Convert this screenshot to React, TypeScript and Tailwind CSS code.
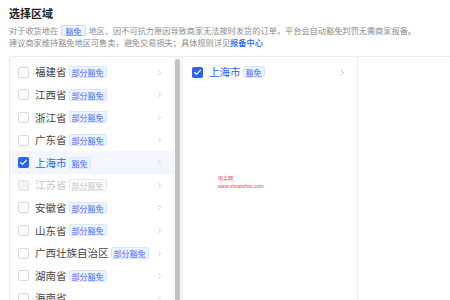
import { Check, ChevronRight } from "lucide-react";

type Region = { name: string; tag?: string; checked?: boolean; disabled?: boolean };

const regions: Region[] = [
  { name: "福建省", tag: "部分豁免" },
  { name: "江西省", tag: "部分豁免" },
  { name: "浙江省", tag: "部分豁免" },
  { name: "广东省", tag: "部分豁免" },
  { name: "上海市", tag: "豁免", checked: true },
  { name: "江苏省", tag: "部分豁免", disabled: true },
  { name: "安徽省", tag: "部分豁免" },
  { name: "山东省", tag: "部分豁免" },
  { name: "广西壮族自治区", tag: "部分豁免" },
  { name: "湖南省", tag: "部分豁免" },
  { name: "海南省" },
];

const CheckBox = ({ checked, disabled }: { checked?: boolean; disabled?: boolean }) => {
  if (checked) {
    return (
      <span className="w-[11px] h-[11px] rounded-[2px] bg-[#2a62f4] flex items-center justify-center shrink-0">
        <Check size={9} strokeWidth={3} color="#fff" />
      </span>
    );
  }
  return (
    <span
      className={
        disabled
          ? "w-[11px] h-[11px] rounded-[2px] border border-[#e2e2e2] bg-[#f3f3f3] shrink-0"
          : "w-[11px] h-[11px] rounded-[2px] border border-[#d9d9d9] bg-white shrink-0"
      }
    />
  );
};

const Tag = ({ text, disabled }: { text: string; disabled?: boolean }) => (
  <span
    className={
      disabled
        ? "ml-[2px] px-[2px] h-[12px] leading-[11px] text-[8px] border border-[#e6e6e6] text-[#c4c4c4] rounded-[2px]"
        : "ml-[2px] px-[2px] h-[12px] leading-[11px] text-[8px] border border-[#dbe6fd] bg-[#edf3ff] text-[#3d6ef5] rounded-[2px]"
    }
  >
    {text}
  </span>
);

const Row = ({ r }: { r: Region }) => (
  <div
    className={`h-[22.6px] flex items-center pl-[8px] pr-[9px] ${r.checked ? "bg-[#f3f6fd]" : ""}`}
  >
    <CheckBox checked={r.checked} disabled={r.disabled} />
    <span
      className={`ml-[6px] text-[10.5px] ${
        r.checked ? "text-[#2a62f4]" : r.disabled ? "text-[#c6c6c6]" : "text-[#444]"
      }`}
    >
      {r.name}
    </span>
    {r.tag && <Tag text={r.tag} disabled={r.disabled} />}
    <ChevronRight size={9} strokeWidth={1.5} className="ml-auto text-[#b5b5b5]" />
  </div>
);

export default function App() {
  return (
    <div className="w-[450px] h-[300px] overflow-hidden bg-white pl-[9px] pt-[5px] font-['Noto_Sans_CJK_SC','Noto_Sans',sans-serif]">
      <h2 className="text-[11px] font-bold text-[#1f1f1f] leading-[16px]">选择区域</h2>
      <div className="mt-[3px] text-[8.2px] text-[#8a8a8a] leading-[12px] whitespace-nowrap">
        <p className="flex items-center h-[12px]">
          对于收货地在
          <span className="mx-[3px] px-[3px] h-[11px] leading-[10px] border border-[#c9dafd] bg-[#eef3ff] text-[#3d6ef5] rounded-[2px]">
            豁免
          </span>
          地区、因不可抗力原因导致商家无法按时发货的订单，平台会自动豁免判罚无需商家报备。
        </p>
        <p>
          建议商家维持豁免地区可售卖，避免交易损失；具体规则详见
          <span className="text-[#2a62f4] font-medium">报备中心</span>
        </p>
      </div>

      <div className="mt-[8px] w-[520px] h-[260px] flex border border-[#ececec] rounded-[2px]">
        <div className="w-[173px] flex border-r border-[#f0f0f0]">
          <div className="w-[163px] pt-[4px] flex flex-col">
            {regions.map((r) => (
              <Row key={r.name} r={r} />
            ))}
          </div>
          <div className="w-[9px] py-[2px] pl-[2px] bg-[#f7f7f7] flex">
            <div className="w-[5px] h-full rounded-full bg-[#c2c2c2]" />
          </div>
        </div>

        <div className="w-[175px] border-r border-[#ececec] relative">
          <div className="pt-[4px]">
            <div className="h-[22.6px] flex items-center pl-[9px] pr-[10px]">
              <CheckBox checked />
              <span className="ml-[6px] text-[10.5px] text-[#2a62f4]">上海市</span>
              <Tag text="豁免" />
              <ChevronRight size={9} strokeWidth={1.5} className="ml-auto text-[#7f95cf]" />
            </div>
          </div>
          <div className="absolute left-[35px] top-[116px] text-[5px] leading-[9px] text-[#e0455a] font-['Liberation_Sans',sans-serif]">
            <div className="font-['Noto_Sans_CJK_SC',sans-serif]">甩手网</div>
            <div>www.shuaishou.com</div>
          </div>
        </div>

        <div className="flex-1" />
      </div>
    </div>
  );
}
